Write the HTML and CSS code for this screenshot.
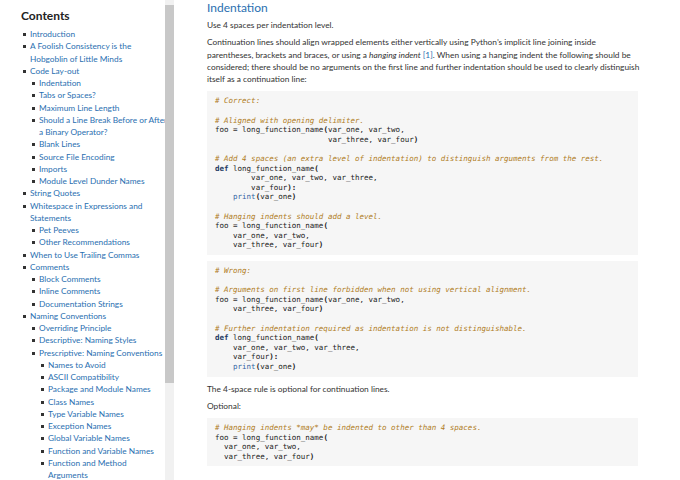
FILE: index.html
```html
<!DOCTYPE html>
<html lang="en">
<head>
<meta charset="utf-8">
<title>PEP 8 – Indentation</title>
<link rel="stylesheet" href="styles.css">
</head>
<body>
<div class="page">
  <nav class="toc">
    <h2 class="toc-title">Contents</h2>
    <ul>
      <li><a href="#">Introduction</a></li>
      <li><a href="#">A Foolish Consistency is the<br>Hobgoblin of Little Minds</a></li>
      <li><a href="#">Code Lay-out</a>
        <ul>
          <li><a href="#">Indentation</a></li>
          <li><a href="#">Tabs or Spaces?</a></li>
          <li><a href="#">Maximum Line Length</a></li>
          <li><a href="#">Should a Line Break Before or After<br>a Binary Operator?</a></li>
          <li><a href="#">Blank Lines</a></li>
          <li><a href="#">Source File Encoding</a></li>
          <li><a href="#">Imports</a></li>
          <li><a href="#">Module Level Dunder Names</a></li>
        </ul>
      </li>
      <li><a href="#">String Quotes</a></li>
      <li><a href="#">Whitespace in Expressions and<br>Statements</a>
        <ul>
          <li><a href="#">Pet Peeves</a></li>
          <li><a href="#">Other Recommendations</a></li>
        </ul>
      </li>
      <li><a href="#">When to Use Trailing Commas</a></li>
      <li><a href="#">Comments</a>
        <ul>
          <li><a href="#">Block Comments</a></li>
          <li><a href="#">Inline Comments</a></li>
          <li><a href="#">Documentation Strings</a></li>
        </ul>
      </li>
      <li><a href="#">Naming Conventions</a>
        <ul>
          <li><a href="#">Overriding Principle</a></li>
          <li><a href="#">Descriptive: Naming Styles</a></li>
          <li><a href="#">Prescriptive: Naming Conventions</a>
            <ul>
              <li><a href="#">Names to Avoid</a></li>
              <li><a href="#">ASCII Compatibility</a></li>
              <li><a href="#">Package and Module Names</a></li>
              <li><a href="#">Class Names</a></li>
              <li><a href="#">Type Variable Names</a></li>
              <li><a href="#">Exception Names</a></li>
              <li><a href="#">Global Variable Names</a></li>
              <li><a href="#">Function and Variable Names</a></li>
              <li><a href="#">Function and Method<br>Arguments</a></li>
              <li><a href="#">Constants</a></li>
            </ul>
          </li>
        </ul>
      </li>
    </ul>
  </nav>
  <div class="scrollbar">
    <div class="scroll-arrow"></div>
    <div class="scroll-thumb"></div>
  </div>
  <main class="content">
    <h2 class="section-title"><a href="#">Indentation</a></h2>
    <p>Use 4 spaces per indentation level.</p>
    <p>Continuation lines should align wrapped elements either vertically using Python’s implicit line joining inside<br>parentheses, brackets and braces, or using a <em>hanging indent</em> <a href="#">[1]</a>. When using a hanging indent the following should be<br>considered; there should be no arguments on the first line and further indentation should be used to clearly distinguish<br>itself as a continuation line:</p>
<pre class="code"><span class="c"># Correct:</span>

<span class="c"># Aligned with opening delimiter.</span>
foo <span class="o">=</span> long_function_name<span class="p">(</span>var_one, var_two,
                         var_three, var_four<span class="p">)</span>

<span class="c"># Add 4 spaces (an extra level of indentation) to distinguish arguments from the rest.</span>
<span class="k">def</span> long_function_name<span class="p">(</span>
        var_one, var_two, var_three,
        var_four<span class="p">):</span>
    <span class="b">print</span><span class="p">(</span>var_one<span class="p">)</span>

<span class="c"># Hanging indents should add a level.</span>
foo <span class="o">=</span> long_function_name<span class="p">(</span>
    var_one, var_two,
    var_three, var_four<span class="p">)</span></pre>
<pre class="code"><span class="c"># Wrong:</span>

<span class="c"># Arguments on first line forbidden when not using vertical alignment.</span>
foo <span class="o">=</span> long_function_name<span class="p">(</span>var_one, var_two,
    var_three, var_four<span class="p">)</span>

<span class="c"># Further indentation required as indentation is not distinguishable.</span>
<span class="k">def</span> long_function_name<span class="p">(</span>
    var_one, var_two, var_three,
    var_four<span class="p">):</span>
    <span class="b">print</span><span class="p">(</span>var_one<span class="p">)</span></pre>
    <p>The 4-space rule is optional for continuation lines.</p>
    <p>Optional:</p>
<pre class="code"><span class="c"># Hanging indents *may* be indented to other than 4 spaces.</span>
foo <span class="o">=</span> long_function_name<span class="p">(</span>
  var_one, var_two,
  var_three, var_four<span class="p">)</span></pre>
  </main>
</div>
</body>
</html>
```

FILE: styles.css
```css
* { box-sizing: border-box; }
html, body { margin: 0; padding: 0; background: #fff; }
body {
  font-family: Lato, "Liberation Sans", sans-serif;
  color: #333;
  width: 680px;
  height: 480px;
  overflow: hidden;
}
.page { display: flex; height: 480px; }

.toc {
  width: 165px;
  flex: none;
  padding: 8px 0 0 21px;
  font-size: 8.3px;
  line-height: 12.25px;
  overflow: hidden;
  white-space: nowrap;
}
.toc-title {
  font-size: 12px;
  font-weight: 700;
  color: #222;
  margin: 0 0 5px;
  line-height: 15px;
}
.toc ul { list-style: none; margin: 0; padding-left: 9px; }
.toc > ul { padding-left: 9px; }
.toc li { color: #333; }
.toc li::before {
  content: "";
  display: inline-block;
  width: 3px;
  height: 3px;
  margin-left: -7px;
  margin-right: 4px;
  background: #333;
  vertical-align: 1px;
}
.toc a { color: #2a6fb1; text-decoration: none; }

.scrollbar {
  width: 9px;
  flex: none;
  display: flex;
  flex-direction: column;
  background: #f1f1f1;
}
.scroll-arrow { height: 5px; background: #f1f1f1; }
.scroll-thumb { height: 378px; background: #c8c8c8; }

.content {
  width: 431px;
  flex: none;
  margin-left: 33px;
  font-size: 8.35px;
  line-height: 12.3px;
  white-space: nowrap;
}
.section-title {
  margin: 0 0 4px;
  font-size: 12px;
  line-height: 15px;
  font-weight: 400;
}
.section-title a {
  color: #2b6aa3;
  text-decoration: underline;
  text-decoration-color: #d5e2ee;
  text-underline-offset: 2px;
}
.content p { margin: 0 0 5px; }
.content a { color: #2a6fb1; text-decoration: none; }
.code {
  margin: 6px 0;
  padding: 5px 8px;
  background: #f6f6f6;
  font-family: "DejaVu Sans Mono", monospace;
  font-size: 7.5px;
  line-height: 9.6px;
  color: #222;
}
.code .c { color: #b07d1e; font-style: italic; }
.code .k { color: #1d3a63; font-weight: 700; }
.code .b { color: #3465a4; }
.code .o { color: #333; }
.code .p { color: #222; font-weight: 700; }
```
